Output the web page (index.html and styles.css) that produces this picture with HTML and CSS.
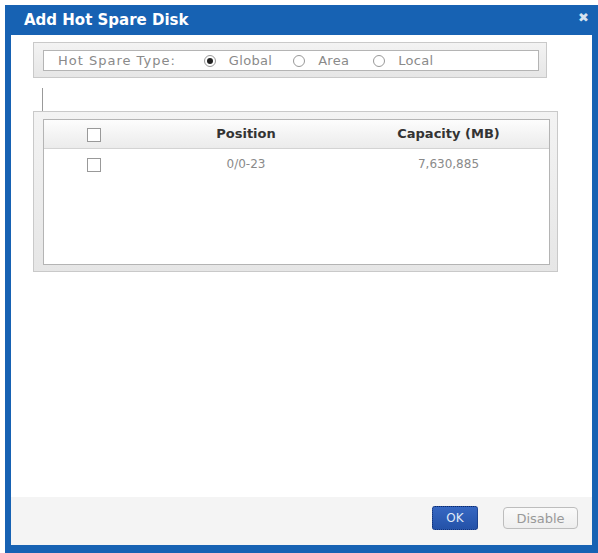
FILE: index.html
```html
<!DOCTYPE html>
<html lang="en">
<head>
    <meta charset="UTF-8">
    <meta name="viewport" content="width=device-width, initial-scale=1.0">
    <title>Add Hot Spare Disk</title>
    <link rel="stylesheet" href="styles.css">
</head>
<body>
    <div class="dialog">
        <div class="dialog-title">
            <span>Add Hot Spare Disk</span>
            <span class="close-btn">&#x2716;</span>
        </div>

        <div class="dialog-body">
            <div class="frame type-frame">
                <div class="frame-inner type-row">
                    <span class="type-label">Hot Spare Type:</span>
                    <label class="radio-opt opt-global"><span class="radio checked"></span>Global</label>
                    <label class="radio-opt opt-area"><span class="radio"></span>Area</label>
                    <label class="radio-opt"><span class="radio"></span>Local</label>
                </div>
            </div>

            <div class="connector"></div>

            <div class="frame table-frame">
                <div class="frame-inner">
                    <table class="disk-table">
                        <thead>
                            <tr>
                                <th class="col-check"><span class="checkbox"></span></th>
                                <th class="col-pos">Position</th>
                                <th class="col-cap">Capacity (MB)</th>
                            </tr>
                        </thead>
                        <tbody>
                            <tr>
                                <td class="col-check"><span class="checkbox"></span></td>
                                <td>0/0-23</td>
                                <td>7,630,885</td>
                            </tr>
                        </tbody>
                    </table>
                </div>
            </div>
        </div>

        <div class="dialog-footer">
            <button class="btn btn-ok">OK</button>
            <button class="btn btn-disable">Disable</button>
        </div>
    </div>
</body>
</html>
```

FILE: styles.css
```css
:root {
    --blue: #1762b3;
    --frame-bg: #ececec;
    --text-gray: #8a8a8a;
}

* {
    margin: 0;
    padding: 0;
    box-sizing: border-box;
}

body {
    font-family: 'DejaVu Sans', Verdana, sans-serif;
    background-color: #fff;
    width: 598px;
    height: 553px;
    overflow: hidden;
}

.dialog {
    margin: 5px 0 0 5px;
    width: 593px;
    height: 548px;
    border: 6px solid var(--blue);
    border-top: none;
    border-bottom-width: 8px;
    display: flex;
    flex-direction: column;
    background-color: #fff;
}

.dialog-title {
    height: 30px;
    margin: 0 -6px;
    padding: 0 9px 0 19px;
    background-color: var(--blue);
    color: #fff;
    font-weight: bold;
    font-size: 15px;
    display: flex;
    align-items: center;
    justify-content: space-between;
}

.close-btn {
    font-size: 13px;
    color: #d6e2f0;
    margin-top: -6px;
}

.dialog-body {
    flex: 1;
    padding: 7px 0 0 22px;
}

.frame {
    background: linear-gradient(#f3f3f3, #e6e6e6);
    border: 1px solid #c9c9c9;
    padding: 7px 7px 6px 9px;
}

.frame-inner {
    background-color: #fff;
    border: 1px solid #b4b4b4;
}

.type-frame {
    width: 514px;
    height: 36px;
}

.type-row {
    height: 21px;
    display: flex;
    align-items: center;
    font-size: 12px;
    color: var(--text-gray);
}

.type-label {
    margin-left: 14px;
    margin-right: 28px;
    font-size: 13px;
    letter-spacing: 1px;
}

.radio-opt {
    display: flex;
    align-items: center;
    font-size: 13px;
    letter-spacing: 0.3px;
    margin-right: 24px;
}

.opt-global {
    margin-right: 21px;
}

.opt-area {
    margin-right: 24px;
}

.radio {
    width: 12px;
    height: 12px;
    border: 1px solid #999;
    border-radius: 50%;
    background-color: #fff;
    margin-right: 13px;
    position: relative;
}

.radio.checked::after {
    content: '';
    position: absolute;
    left: 2px;
    top: 2px;
    width: 6px;
    height: 6px;
    border-radius: 50%;
    background-color: #222;
}

.connector {
    width: 1px;
    height: 23px;
    margin: 10px 0 0 9px;
    background-color: #999;
}

.table-frame {
    width: 525px;
    height: 161px;
}

.table-frame .frame-inner {
    height: 146px;
}

.disk-table {
    width: 100%;
    border-collapse: collapse;
    font-size: 12px;
    color: var(--text-gray);
    text-align: center;
}

.disk-table th {
    height: 28px;
    background: linear-gradient(#fdfdfd, #ebebeb);
    border-bottom: 1px solid #d3d3d3;
    color: #333;
    font-size: 13px;
}

.disk-table td {
    height: 32px;
}

.col-check {
    width: 100px;
}

.col-pos {
    width: 204px;
}

.checkbox {
    display: inline-block;
    width: 14px;
    height: 14px;
    border: 1px solid #999;
    background-color: #fff;
    vertical-align: middle;
}

.dialog-footer {
    height: 48px;
    background-color: #f4f4f4;
    display: flex;
    justify-content: flex-end;
    align-items: center;
    gap: 25px;
    padding: 0 14px 6px 0;
}

.btn {
    font-family: 'DejaVu Sans', Verdana, sans-serif;
    font-size: 12px;
    cursor: pointer;
}

.btn-ok {
    width: 46px;
    height: 24px;
    background: linear-gradient(#3667c2, #2452a8);
    color: #dfe8f7;
    border: 1px dotted #0d2a6b;
    border-radius: 3px;
}

.btn-disable {
    width: 75px;
    height: 22px;
    background: linear-gradient(#fafafa, #eeeeee);
    color: #999;
    font-size: 13px;
    border: 1px solid #bdbdbd;
    border-radius: 4px;
}
```
